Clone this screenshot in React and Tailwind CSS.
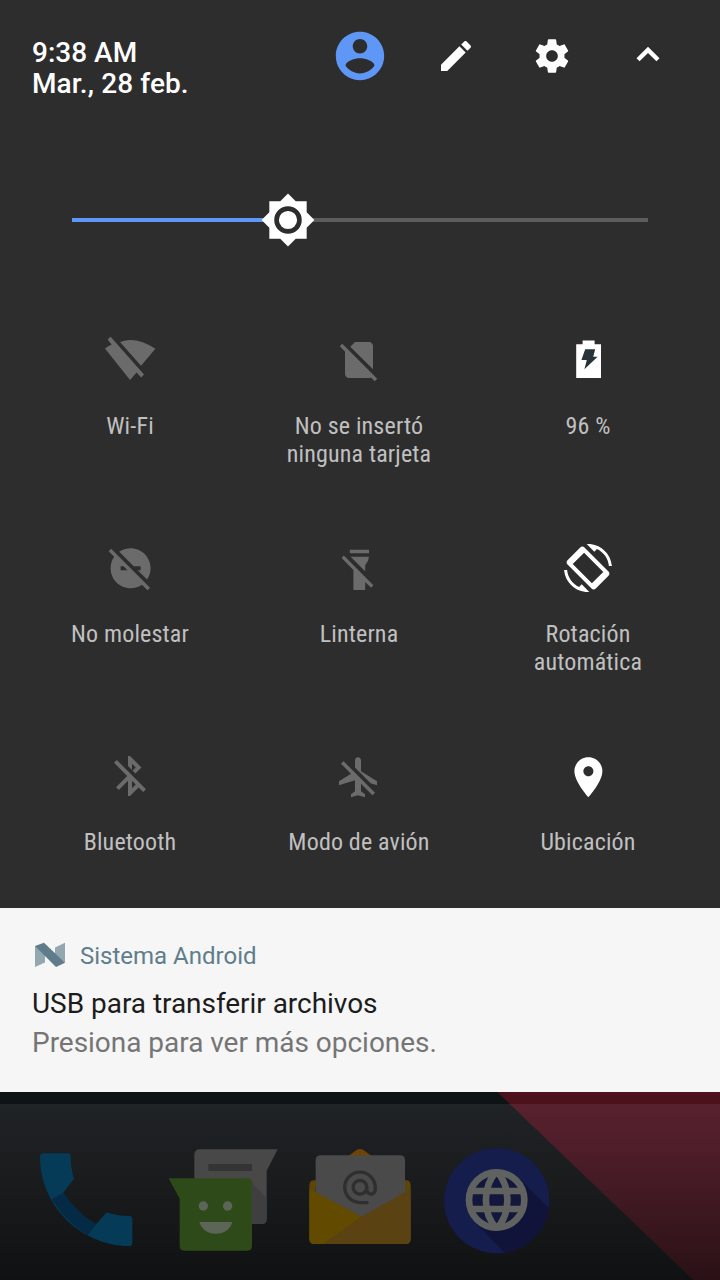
import { MdAlternateEmail } from "react-icons/md";

const tiles = [
  {
    label: ["Wi-Fi"],
    on: false,
    icon: <path d="M2.3.4 19 19.2l-1.4 1.5-2.3-2.5L12 22-.5 6.2q1.6-1.2 3.3-2L.8 1.8zM7 3Q15-.2 24.7 6.4l-7.2 8.5z" />,
  },
  {
    label: ["No se insertó", "ninguna tarjeta"],
    on: false,
    icon: <path d="M18.99 5c0-1.1-.89-2-1.99-2h-7L7.66 5.34 19 16.68 18.99 5zM3.65 3.88L2.38 5.15 5 7.77V19c0 1.1.9 2 2 2h10.01c.35 0 .67-.1.96-.26l1.88 1.88 1.27-1.27L3.65 3.88z" />,
  },
  {
    label: ["96 %"],
    on: true,
    icon: (
      <>
        <path d="M9.3 2.3h6v1.8h3.2V21H6.1V4.1h3.2z" />
        <path d="M10.6 6.6h5l-1 3.8h2.2L10.2 16.6l1.2-4.6H8.7z" fill="#263238" />
      </>
    ),
  },
  {
    label: ["No molestar"],
    on: false,
    icon: <path transform="translate(.3 .1)" d="M17 11v2h-1.46l4.68 4.68C21.34 16.07 22 14.11 22 12c0-5.52-4.48-10-10-10-2.11 0-4.07.66-5.68 1.78L13.54 11H17zM2.27 2.27L1 3.54l2.78 2.78C2.66 7.93 2 9.89 2 12c0 5.52 4.48 10 10 10 2.11 0 4.07-.66 5.68-1.78L20.46 23l1.27-1.27L11 11 2.27 2.27zM7 13v-2h1.46l2 2H7z" />,
  },
  {
    label: ["Linterna"],
    on: false,
    icon: <path d="M7.4 2.9H17v1.7H7.4zM7.8 6.4H17q-.2 2.2-1.9 4.2v3zM4.4 5.8 19.2 20.6 18 21.9l-2.9-2.9v4H9.2v-10L3.3 7z" />,
  },
  {
    label: ["Rotación", "automática"],
    on: true,
    icon: <path d="M16.48 2.52c3.27 1.55 5.61 4.72 5.97 8.48h1.5C23.44 4.84 18.29 0 12 0l-.66.03 3.81 3.81 1.33-1.32zm-6.25-.77c-.59-.59-1.54-.59-2.12 0L1.75 8.11c-.59.59-.59 1.54 0 2.12l12.02 12.02c.59.59 1.54.59 2.12 0l6.36-6.36c.59-.59.59-1.54 0-2.12L10.23 1.75zM13.95 19.65 4.35 10.05l5.7-5.7 9.6 9.6-5.7 5.7zM7.52 21.48C4.25 19.94 1.91 16.76 1.55 13H.05C.56 19.16 5.71 24 12 24l.66-.03-3.81-3.81-1.33 1.32z" />,
  },
  {
    label: ["Bluetooth"],
    on: false,
    icon: <path d="M13 5.83l1.88 1.88-1.6 1.6 1.41 1.41 3.02-3.02L12 2h-1v5.03l2 2v-3.2zM5.41 4L4 5.41 10.59 12 5 17.59 6.41 19 11 14.41V22h1l4.29-4.29 2.3 2.29L20 18.59 5.41 4zM13 18.17v-3.76l1.88 1.88L13 18.17z" />,
  },
  {
    label: ["Modo de avión"],
    on: false,
    icon: <path transform="translate(0 .6)" d="M13 9V3.5c0-.83-.67-1.5-1.5-1.5S10 2.67 10 3.5v3.68l7.83 7.83L21 16v-2l-8-5zM3 5.27l4.99 4.99L2 14v2l8-2.5V19l-2 1.5V22l3.5-1 3.5 1v-1.5L13 19v-3.73L18.73 21 20 19.73 4.27 4 3 5.27z" />,
  },
  {
    label: ["Ubicación"],
    on: true,
    icon: <path transform="translate(.2 .6)" d="M12 2C8.13 2 5 5.13 5 9c0 5.25 7 13 7 13s7-7.75 7-13c0-3.87-3.13-7-7-7zm0 9.5c-1.38 0-2.5-1.12-2.5-2.5s1.12-2.5 2.5-2.5 2.5 1.12 2.5 2.5-1.12 2.5-2.5 2.5z" />,
  },
];

function Header() {
  return (
    <header className="flex h-28 items-start justify-between pl-8 pr-6">
      <div className="pt-[37px] text-[28px] leading-[31px] font-medium text-white">
        <p>9:38 AM</p>
        <p className="tracking-[0.1px]">Mar., 28 feb.</p>
      </div>

      <div className="flex h-28 text-white">
        <button className="flex h-28 w-24 items-center justify-center">
          <svg viewBox="0 0 24 24" className="size-[58px] fill-[#5e97f6]">
            <path d="M12 2C6.48 2 2 6.48 2 12s4.48 10 10 10 10-4.48 10-10S17.52 2 12 2zm0 3c1.66 0 3 1.34 3 3s-1.34 3-3 3-3-1.34-3-3 1.34-3 3-3zm0 14.2c-2.5 0-4.71-1.28-6-3.22.03-1.99 4-3.08 6-3.08 1.99 0 5.97 1.09 6 3.08-1.29 1.94-3.5 3.22-6 3.22z" />
          </svg>
        </button>
        <button className="flex h-28 w-24 items-center justify-center">
          <svg viewBox="0 0 24 24" className="size-10 fill-current">
            <path d="M3 17.25V21h3.75L17.81 9.94l-3.75-3.75L3 17.25zM20.71 7.04c.39-.39.39-1.02 0-1.41l-2.34-2.34c-.39-.39-1.02-.39-1.41 0l-1.83 1.83 3.75 3.75 1.83-1.83z" />
          </svg>
        </button>
        <button className="flex h-28 w-24 items-center justify-center">
          <svg viewBox="0 0 24 24" className="size-10 fill-current">
            <path d="M19.43 12.98c.04-.32.07-.64.07-.98s-.03-.66-.07-.98l2.11-1.65c.19-.15.24-.42.12-.64l-2-3.46c-.12-.22-.39-.3-.61-.22l-2.49 1c-.52-.4-1.08-.73-1.69-.98l-.38-2.65C14.46 2.18 14.25 2 14 2h-4c-.25 0-.46.18-.49.42l-.38 2.65c-.61.25-1.17.59-1.69.98l-2.49-1c-.23-.09-.49 0-.61.22l-2 3.46c-.13.22-.07.49.12.64l2.11 1.65c-.04.32-.07.65-.07.98s.03.66.07.98l-2.11 1.65c-.19.15-.24.42-.12.64l2 3.46c.12.22.39.3.61.22l2.49-1c.52.4 1.08.73 1.69.98l.38 2.65c.03.24.24.42.49.42h4c.25 0 .46-.18.49-.42l.38-2.65c.61-.25 1.17-.59 1.69-.98l2.49 1c.23.09.49 0 .61-.22l2-3.46c.12-.22.07-.49-.12-.64l-2.11-1.65zM12 15.5c-1.93 0-3.5-1.57-3.5-3.5s1.57-3.5 3.5-3.5 3.5 1.57 3.5 3.5-1.57 3.5-3.5 3.5z" />
          </svg>
        </button>
        <button className="flex h-28 w-24 items-center justify-center">
          <svg viewBox="0 0 24 24" className="size-[46px] fill-current">
            <path d="M12 7.2l-6 6 1.6 1.6 4.4-4.4 4.4 4.4 1.6-1.6z" />
          </svg>
        </button>
      </div>
    </header>
  );
}

function Brightness({ value }) {
  return (
    <div className="flex h-[216px] items-center px-[72px]">
      <div className="relative h-1 w-full bg-[#5c5c5c]">
        <div className="h-1 bg-[#5e97f6]" style={{ width: `${value}%` }} />
        <svg
          viewBox="0 0 24 24"
          className="absolute top-1/2 size-14 -translate-x-1/2 -translate-y-1/2"
          style={{ left: `${value}%` }}
        >
          <path fill="#fff" d="M20 8.69V4h-4.69L12 .69 8.69 4H4v4.69L.69 12 4 15.31V20h4.69L12 23.31 15.31 20H20v-4.69L23.31 12 20 8.69z" />
          <circle cx="12" cy="12" r="4.9" fill="none" stroke="#2d2d2d" strokeWidth="2" />
        </svg>
      </div>
    </div>
  );
}

function Tile({ label, on, icon }) {
  return (
    <div className="flex h-52 flex-col items-center pt-2">
      <svg viewBox="0 0 24 24" className={on ? "size-12 overflow-visible fill-white" : "size-12 overflow-visible fill-[#6b6b6b]"}>
        {icon}
      </svg>
      <div className="mt-7 text-center font-['Roboto_Condensed','Roboto',sans-serif] text-2xl leading-7 tracking-[0.17px] whitespace-nowrap text-[#c0c0c0] font-stretch-condensed">
        {label.map((line) => (
          <p key={line}>{line}</p>
        ))}
      </div>
    </div>
  );
}

function Notification() {
  return (
    <section className="h-[184px] bg-[#f6f6f6] px-8 pt-8">
      <div className="flex h-8 items-center gap-3 text-2xl text-[#607d8b]">
        <svg viewBox="0 0 36 32" className="h-8 w-9">
          <path d="M3 6v21l10-4.5V11zM23 7.5l10-4.8v20l-10-8z" fill="#93a7af" />
          <path d="M3 6l9-3.3 21 20L24 27z" fill="#5f7c8a" />
        </svg>
        <span>Sistema Android</span>
      </div>
      <p className="mt-3 text-[28px] leading-10 tracking-[-0.04px] text-[#1c1c1c]">USB para transferir archivos</p>
      <p className="text-[28px] leading-[38px] tracking-[-0.03px] text-[#757575]">Presiona para ver más opciones.</p>
    </section>
  );
}

function Dock() {
  return (
    <svg viewBox="0 0 2160 564" className="block h-[188px] w-[720px]">
      <defs>
        <linearGradient id="wall" x1="0" y1="0" x2="0" y2="1">
          <stop offset="0" stopColor="#212428" />
          <stop offset="0.5" stopColor="#191b1c" />
          <stop offset="1" stopColor="#101112" />
        </linearGradient>
        <linearGradient id="red" x1="0" y1="0" x2="0" y2="1">
          <stop offset="0" stopColor="#5c2230" />
          <stop offset="0.5" stopColor="#441a24" />
          <stop offset="1" stopColor="#2a1116" />
        </linearGradient>
        <clipPath id="disc">
          <circle cx="1490" cy="326" r="158" />
        </clipPath>
      </defs>

      <rect width="2160" height="564" fill="url(#wall)" />
      <path d="M1492 0H2160V564H2080z" fill="url(#red)" />
      <rect width="2160" height="36" fill="#0e1416" />
      <path d="M1492 0H2160V36H1530z" fill="#4d111c" />

      {/* phone */}
      <path d="M130 184H203Q212 184 212 193Q212 228 222 260L190 302Q230 362 288 397L320 361Q350 372 388 372Q397 373 397 382V452Q397 462 387 462C240 460 120 340 120 194Q120 184 130 184z" fill="#053b57" />
      <path d="M155 322L190 302Q230 362 288 397L264 430Q198 392 155 322z" fill="#042a45" />

      {/* messages */}
      <path d="M600 172H833L800 236V381Q800 396 785 396H598Q583 396 583 381V189Q583 172 600 172z" fill="#484848" />
      <path d="M625 216H756V237H625z" fill="#343434" />
      <path d="M742 259L800 317V381Q800 396 785 396H756z" fill="#3f3f3f" />
      <path d="M506 259H742Q756 259 756 273V462Q756 476 742 476H553Q539 476 539 462V320z" fill="#2f4a19" />
      <circle cx="610" cy="342" r="14" fill="#5d6558" />
      <circle cx="683" cy="342" r="14" fill="#5d6558" />
      <path d="M598 390H697Q686 425 647 425Q610 425 598 390z" fill="#5d6558" />

      {/* mail */}
      <path d="M928 284L1064 178Q1080 164 1096 178L1232 284z" fill="#704205" />
      <path d="M947 205Q947 190 962 190H1200Q1215 190 1215 205V380H947z" fill="#4a4a4a" />
      <MdAlternateEmail x="1019" y="225" size={122} color="#2f2f2f" />
      <path d="M928 279Q928 272 934 266L947 264V305L1085 374L1215 305V264L1226 266Q1232 272 1232 279V441Q1232 456 1217 456H943Q928 456 928 441z" fill="#5e4508" />
      <path d="M928 290L1085 374L970 456H943Q928 456 928 441z" fill="#624a00" />
      <path d="M1085 374L1232 290V441Q1232 456 1217 456H970z" fill="#5b4212" />

      {/* browser */}
      <circle cx="1490" cy="326" r="158" fill="#151d4d" />
      <path clipPath="url(#disc)" d="M1556 258L1700 400V540H1570L1424 390z" fill="#11143a" />
      <circle cx="1490" cy="324" r="83" fill="#14173c" />
      <g fill="none" stroke="#606260" strokeWidth="20">
        <circle cx="1490" cy="324" r="83" />
        <path d="M1490 238C1447 284 1447 364 1490 410M1490 238C1533 284 1533 364 1490 410" />
        <path d="M1414 297H1566M1414 351H1566" />
      </g>
    </svg>
  );
}

export default function App() {
  return (
    <div className="flex h-[1280px] w-[720px] flex-col overflow-hidden bg-[#2d2d2d] font-['Roboto',sans-serif]">
      <Header />
      <Brightness value={37.5} />
      <div className="grid h-[580px] grid-cols-[repeat(3,229px)] pl-[15.5px]">
        {tiles.map((tile) => (
          <Tile key={tile.label[0]} {...tile} />
        ))}
      </div>
      <Notification />
      <Dock />
    </div>
  );
}
